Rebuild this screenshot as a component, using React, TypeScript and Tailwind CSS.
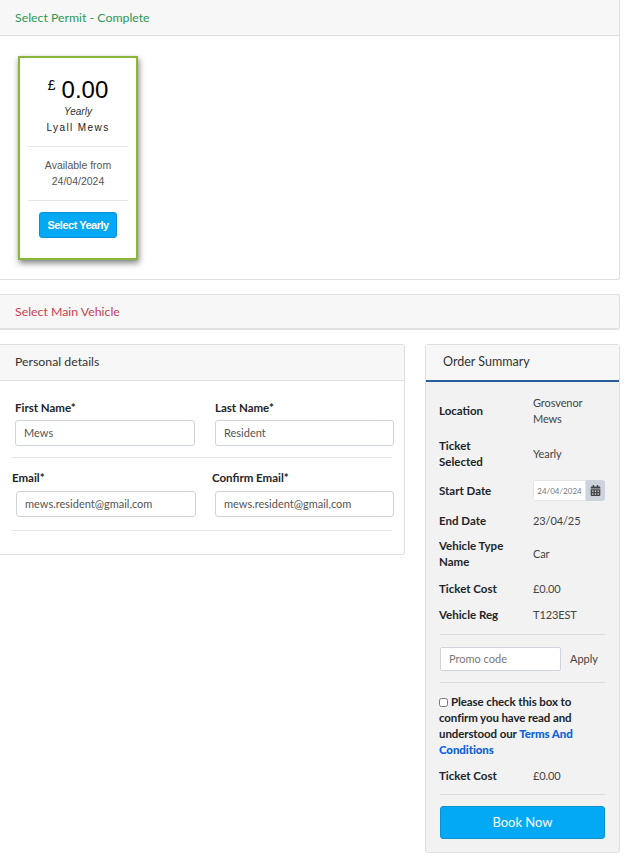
import { FaCalendarAlt } from "react-icons/fa"

const Row = ({ label, children, className = "" }: { label: React.ReactNode; children: React.ReactNode; className?: string }) => (
    <div className={`flex items-center ${className}`}>
        <div className="w-[94px] -ml-[1px] font-bold text-[11.5px] text-[#212529] leading-[16px]">{label}</div>
        <div className="flex-1 text-[#444] text-[11px] tracking-[-0.1px] leading-[16px]">{children}</div>
    </div>
)

const Field = ({ label, value, labelLeft, inputLeft }: { label: string; value: string; labelLeft: string; inputLeft: string }) => (
    <div className="w-[180px]">
        <label className={`block font-bold text-[11.5px] text-[#212529] leading-[16px] ${labelLeft}`}>{label}</label>
        <div className={`h-[26px] border border-[#ced4da] rounded-[3px] bg-white flex items-center px-2 text-[11px] text-[#555] ${inputLeft}`}>{value}</div>
    </div>
)

export default function App() {
    return (
        <div className="w-[629px] h-[859px] overflow-hidden bg-white text-[12px] font-['Lato','Open_Sans',sans-serif]">
            <div className="w-[620px] h-[280px] border border-l-0 border-t-0 border-[#dfdfdf] rounded-br-[3px]">
                <div className="h-[36px] bg-[#f7f7f7] border-b border-[#dfdfdf] pl-[15px] pt-[1px] flex items-center text-[12.3px] text-[#2a9a55]">
                    Select Permit - Complete
                </div>
                <div className="pt-[20px] pl-[18px]">
                    <div className="w-[120px] h-[204px] border-[2px] border-[#8ab53c] shadow-[1px_3px_6px_rgba(0,0,0,0.5)] bg-white font-['Liberation_Sans',sans-serif] text-center px-[8px]">
                        <div className="pt-[19px] flex justify-center items-start text-black leading-none">
                            <span className="text-[14px] mr-[6px] mt-[1px]">£</span>
                            <span className="text-[24px] leading-[26px]">0.00</span>
                        </div>
                        <div className="text-[10px] italic text-[#333] leading-[12px] mt-[3px]">Yearly</div>
                        <div className="text-[10px] tracking-[1.4px] text-[#222] leading-[12px] mt-[4px]">Lyall Mews</div>
                        <div className="mt-[12px] border-t border-[#e5e5e5] pt-[10px] pb-[11px] text-[10.5px] text-[#555] leading-[16px]">
                            <div>Available from</div>
                            <div>24/04/2024</div>
                        </div>
                        <div className="border-t border-[#e5e5e5] pt-[11px] flex justify-center">
                            <button className="w-[78px] h-[26px] rounded-[3px] bg-[#03a9f4] border border-[#0e90d0] text-white text-[11px] font-bold tracking-[-0.5px]">
                                Select Yearly
                            </button>
                        </div>
                    </div>
                </div>
            </div>

            <div className="mt-[14px] w-[620px] h-[36px] bg-[#f7f7f7] border border-l-0 border-[#e0e0e0] border-b-[2px] rounded-r-[3px] pl-[15px] pt-[2px] flex items-center text-[12.3px] text-[#c9414f]">
                Select Main Vehicle
            </div>

            <div className="mt-[14px] w-[620px] flex items-start justify-between">
                <div className="w-[405px] h-[211px] border border-l-0 border-[#dfdfdf] rounded-r-[3px]">
                    <div className="h-[36px] bg-[#f7f7f7] border-b border-[#dfdfdf] pl-[15px] flex items-center text-[12.3px] text-[#333]">
                        Personal details
                    </div>
                    <div className="pt-[19px]">
                        <div className="flex pl-[15px] gap-[20px] pb-[11px]">
                            <Field label="First Name*" value="Mews" labelLeft="" inputLeft="mt-[4px]" />
                            <Field label="Last Name*" value="Resident" labelLeft="" inputLeft="mt-[4px] w-[179px]" />
                        </div>
                        <div className="mx-[12px] border-t border-[#e5e5e5]" />
                        <div className="flex pl-[16px] gap-[19px] pt-[12px] pb-[13px]">
                            <Field label="Email*" value="mews.resident@gmail,com" labelLeft="-ml-[4px]" inputLeft="mt-[5px]" />
                            <Field label="Confirm Email*" value="mews.resident@gmail,com" labelLeft="-ml-[3px]" inputLeft="mt-[5px] w-[179px]" />
                        </div>
                        <div className="mx-[12px] border-t border-[#e5e5e5]" />
                    </div>
                </div>

                <div className="w-[195px] h-[509px] bg-[#f2f2f3] border border-[#dfdfdf] rounded-[3px]">
                    <div className="h-[37px] bg-[#f7f7f7] border-b-[2px] border-[#2a5d9c] pl-[17px] flex items-center text-[12.5px] text-[#333]">
                        Order Summary
                    </div>
                    <div className="px-[14px] pt-[13px]">
                        <Row label="Location">
                            <div>Grosvenor</div>
                            <div>Mews</div>
                        </Row>
                        <Row label={<>Ticket<br />Selected</>} className="mt-[11px]">Yearly</Row>
                        <Row label="Start Date" className="mt-[10px]">
                            <div className="flex h-[21px] w-[72px] rounded-[3px] overflow-hidden">
                                <div className="w-[53px] bg-white border border-[#e5e5e5] text-[8px] tracking-normal text-[#777] flex items-center justify-center">24/04/2024</div>
                                <div className="flex-1 bg-[#ccd3dc] flex items-center justify-center">
                                    <FaCalendarAlt size={11} className="text-[#444]" />
                                </div>
                            </div>
                        </Row>
                        <Row label="End Date" className="mt-[12px]">23/04/25</Row>
                        <Row label={<>Vehicle Type<br />Name</>} className="mt-[9px]">Car</Row>
                        <Row label="Ticket Cost" className="mt-[11px]">£0.00</Row>
                        <Row label="Vehicle Reg" className="mt-[10px]">T123EST</Row>
                        <div className="mt-[11px] border-t border-[#dcdcdc]" />
                        <div className="flex items-center mt-[12px]">
                            <div className="w-[121px] h-[24px] bg-white border border-[#ced4da] rounded-[2px] flex items-center pl-[8px] text-[11px] text-[#777]">Promo code</div>
                            <span className="ml-[9px] text-[11px] text-[#444]">Apply</span>
                        </div>
                        <div className="mt-[11px] border-t border-[#dcdcdc]" />
                        <div className="mt-[11px] -ml-[1px] font-bold text-[11.5px] tracking-[-0.1px] text-[#212529] leading-[16px]">
                            <input type="checkbox" className="w-[9px] h-[9px] mr-[3px] align-[-0.5px]" />
                            Please check this box to confirm you have read and understood our{" "}
                            <span className="font-black text-[#0d62e0]">Terms And Conditions</span>
                        </div>
                        <Row label="Ticket Cost" className="mt-[10px]">£0.00</Row>
                        <div className="mt-[10px] border-t border-[#dcdcdc]" />
                        <button className="mt-[11px] w-full h-[33px] rounded-[3px] bg-[#03a9f4] border border-[#0e90d0] text-white text-[13px]">
                            Book Now
                        </button>
                    </div>
                </div>
            </div>
        </div>
    )
}
